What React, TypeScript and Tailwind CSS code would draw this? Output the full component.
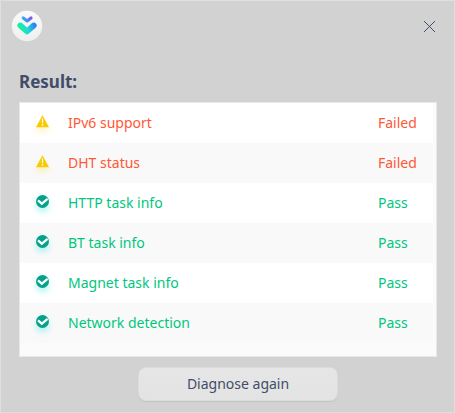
const rows = [
  { name: 'IPv6 support', ok: false },
  { name: 'DHT status', ok: false },
  { name: 'HTTP task info', ok: true },
  { name: 'BT task info', ok: true },
  { name: 'Magnet task info', ok: true },
  { name: 'Network detection', ok: true },
];

function Logo() {
  return (
    <svg className="size-8" viewBox="0 0 32 32" fill="none">
      <defs>
        <linearGradient id="disc" x1="0" y1="0" x2="0" y2="1">
          <stop stopColor="#fafafa" />
          <stop offset="1" stopColor="#efefef" />
        </linearGradient>
        <linearGradient id="big" x1="8" y1="19" x2="24" y2="14" gradientUnits="userSpaceOnUse">
          <stop stopColor="#16f09c" />
          <stop offset=".5" stopColor="#22dcd0" />
          <stop offset="1" stopColor="#2e78ff" />
        </linearGradient>
        <linearGradient id="small" x1="11" y1="10" x2="21" y2="8" gradientUnits="userSpaceOnUse">
          <stop stopColor="#35b5f8" />
          <stop offset=".5" stopColor="#4a8cf5" />
          <stop offset="1" stopColor="#7c58dc" />
        </linearGradient>
      </defs>
      <circle cx="16" cy="16" r="15.2" fill="url(#disc)" />
      <path d="M12.2 7.9 16.1 10.9 20 7.9" stroke="url(#small)" strokeWidth="3.2" strokeLinecap="round" strokeLinejoin="round" />
      <path d="M9.3 15.5 16 21.4 22.7 15.5" stroke="url(#big)" strokeWidth="5.8" strokeLinecap="round" strokeLinejoin="round" />
    </svg>
  );
}

function WarningIcon() {
  return (
    <svg className="h-[13px] w-[13px] overflow-visible drop-shadow-[0_4px_3px_rgba(255,210,0,0.28)]" viewBox="0 0 13 13">
      <path d="M6.5.3 13 12.3H0Z" fill="#f8ca00" />
      <path d="M6.5 3.6v4.6M6.5 9.2v1.6" stroke="#fff" strokeWidth="1.2" />
    </svg>
  );
}

function PassIcon() {
  return (
    <svg className="h-[13px] w-[13px] overflow-visible drop-shadow-[0_4px_3px_rgba(0,225,220,0.3)]" viewBox="0 0 13 13">
      <circle cx="6.5" cy="6.5" r="6.5" fill="#04a28b" />
      <path d="M2 5.4 5.8 8.7 11.6 3.9" fill="none" stroke="#fff" strokeWidth="2.2" />
    </svg>
  );
}

export default function App() {
  return (
    <div className="flex h-[413px] w-[455px] flex-col border border-[#dfdfdf] bg-[#d2d2d2] font-['Noto_Sans',sans-serif] text-[14px] text-[#414d68]">
      <header className="flex h-[50px] shrink-0 items-center justify-between pr-[19px] pl-[10px]">
        <Logo />
        <button aria-label="Close" className="size-[11px]">
          <svg className="size-[11px]" viewBox="0 0 11 11" shapeRendering="crispEdges">
            <path d="M0 0 11 11M11 0 0 11" stroke="#414d68" strokeWidth="1" />
          </svg>
        </button>
      </header>
      <h1 className="mt-[19px] ml-[18px] h-[32px] shrink-0 text-[17px] leading-[24px] font-bold">Result:</h1>
      <main className="ml-[18px] h-[255px] w-[418px] shrink-0 border border-[#e8e8e8] bg-[#fbfbfb]">
        <ul className="w-[413px]">
          {rows.map((row, i) => (
            <li
              key={row.name}
              className={`flex h-10 items-center ${i % 2 ? 'bg-[#f9f9f9]' : 'bg-white'} ${row.ok ? 'text-[#00c77d]' : 'text-[#ff5736]'}`}
            >
              <span className="mb-[3px] ml-4 w-8">{row.ok ? <PassIcon /> : <WarningIcon />}</span>
              <span className="mb-0.5 w-[310px]">{row.name}</span>
              <span className="mb-0.5">{row.ok ? 'Pass' : 'Failed'}</span>
            </li>
          ))}
        </ul>
      </main>
      <button className="mt-[10px] ml-[137px] h-[34px] w-[200px] shrink-0 rounded-lg border border-[#dcdcdc] bg-linear-to-b from-[#e6e6e6] to-[#e3e3e3] pb-0.5 shadow-[0_1px_1px_rgba(0,0,0,0.07)]">
        Diagnose again
      </button>
    </div>
  );
}
